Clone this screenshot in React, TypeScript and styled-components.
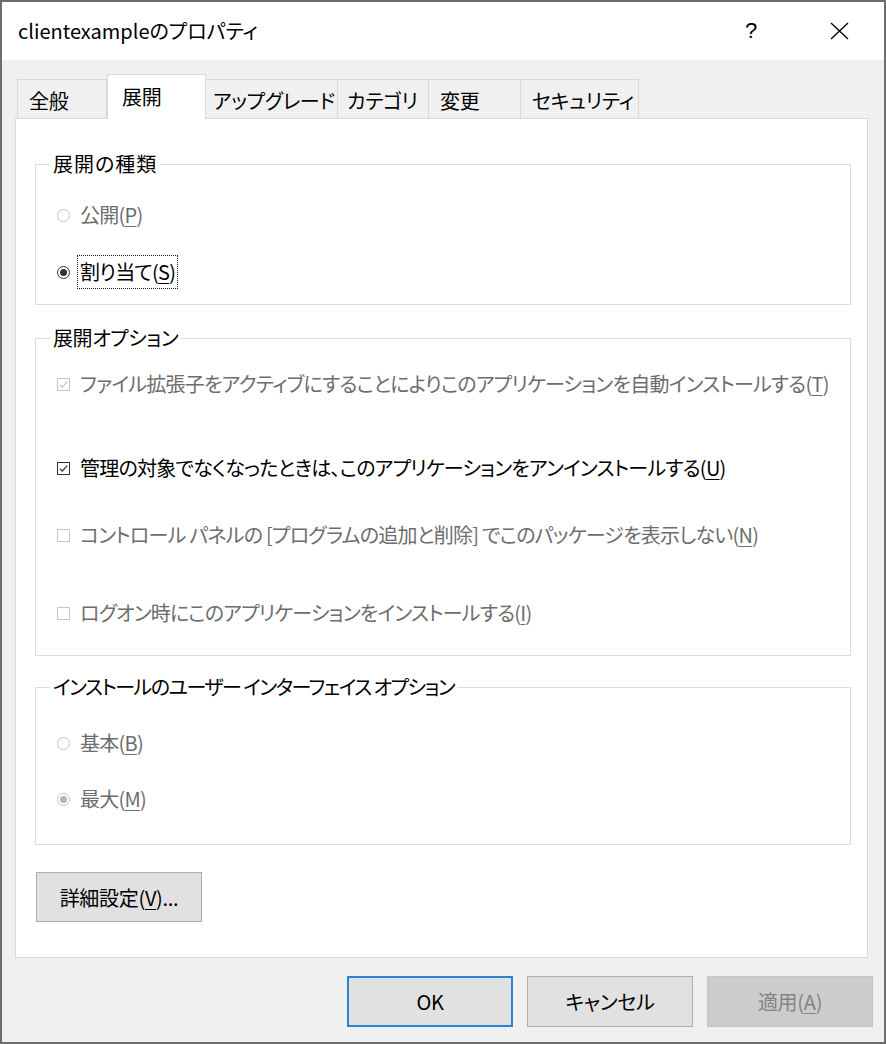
import React from 'react';
import styled, { createGlobalStyle } from 'styled-components';

const FONT = '"Noto Sans CJK JP", "Noto Sans", sans-serif';

const Global = createGlobalStyle`
  html, body { margin: 0; padding: 0; background: #ffffff; }
  body { font-family: ${FONT}; font-feature-settings: "palt"; color: #000; }
  * { box-sizing: border-box; }
`;

const Window = styled.div`
  width: 886px;
  height: 1044px;
  border: 2px solid #6e6e6e;
  display: flex;
  flex-direction: column;
  background: #f0f0f0;
`;

const TitleBar = styled.div`
  height: 58px;
  background: #ffffff;
  display: flex;
  align-items: center;
  padding-left: 16px;
  flex-shrink: 0;
`;

const Title = styled.div`
  font-size: 20px;
  flex: 1;
  color: #000;
  padding-bottom: 2px;
`;

const CaptionButton = styled.div<{ $w: number }>`
  width: ${(p) => p.$w}px;
  height: 58px;
  display: flex;
  align-items: center;
  justify-content: center;
  font-size: 22px;
  font-family: "Liberation Sans", sans-serif;
  color: #000;
`;

const Body = styled.div`
  flex: 1;
  display: flex;
  flex-direction: column;
  padding: 14px 11px 15px 13px;
`;

const TabRow = styled.div`
  height: 44px;
  display: flex;
  align-items: flex-end;
  padding-left: 3px;
  margin-right: 5px;
`;

const Tab = styled.div<{ $w: number; $active?: boolean; $pl: number }>`
  width: ${(p) => p.$w}px;
  height: ${(p) => (p.$active ? 45 : 39)}px;
  margin-bottom: ${(p) => (p.$active ? -1 : 0)}px;
  margin-left: ${(p) => (p.$active ? 0 : -1)}px;
  background: ${(p) => (p.$active ? '#ffffff' : '#f0f0f0')};
  border: 1px solid #d9d9d9;
  border-bottom: none;
  font-size: 20px;
  display: flex;
  align-items: center;
  padding-left: ${(p) => p.$pl}px;
  padding-top: ${(p) => (p.$active ? 0 : 3)}px;
  padding-bottom: ${(p) => (p.$active ? 2 : 0)}px;
  position: relative;
  z-index: ${(p) => (p.$active ? 2 : 1)};
  color: #000;
  white-space: nowrap;
  letter-spacing: -0.3px;
`;

const Panel = styled.div`
  flex: 1;
  background: #ffffff;
  border: 1px solid #d9d9d9;
  margin-right: 5px;
  padding: 31px 16px 0 19px;
  display: flex;
  flex-direction: column;
`;

const Group = styled.fieldset<{ $mt: number; $pt: number; $pb: number }>`
  margin: ${(p) => p.$mt}px 0 0 0;
  min-width: 0;
  border: 1px solid #dcdcdc;
  padding: ${(p) => p.$pt}px 16px ${(p) => p.$pb}px 21px;
`;

const Legend = styled.legend<{ $ls?: number }>`
  font-size: 20px;
  line-height: 28px;
  padding: 0 3px;
  margin-left: -7px;
  letter-spacing: ${(p) => p.$ls ?? 0}px;
  color: #000;
`;

const Row = styled.div<{ $mt?: number }>`
  height: 30px;
  margin-top: ${(p) => p.$mt ?? 0}px;
  display: flex;
  align-items: center;
`;

const Label = styled.span<{ $disabled?: boolean; $focus?: boolean }>`
  font-size: 20px;
  line-height: 28px;
  letter-spacing: -0.75px;
  margin-left: 7px;
  padding: 2px 2px;
  border: 1px ${(p) => (p.$focus ? 'dotted #1a1a1a' : 'solid transparent')};
  color: ${(p) => (p.$disabled ? '#6d6d6d' : '#000')};
  white-space: nowrap;
  u { text-underline-offset: 3px; text-decoration-thickness: 1px; }
`;

const Radio = ({ checked, disabled }: { checked?: boolean; disabled?: boolean }) => {
  const ring = disabled ? '#c2c2c2' : '#333333';
  const dot = disabled ? '#b5b5b5' : '#333333';
  return (
    <svg width="13" height="13" viewBox="0 0 13 13" style={{ flexShrink: 0 }}>
      <circle cx="6.5" cy="6.5" r="6" fill="#fff" stroke={ring} strokeWidth="1" />
      {checked && <circle cx="6.5" cy="6.5" r="3.5" fill={dot} />}
    </svg>
  );
};

const Check = ({ checked, disabled }: { checked?: boolean; disabled?: boolean }) => {
  const c = disabled ? '#c6c6c6' : '#333333';
  return (
    <svg width="13" height="13" viewBox="0 0 13 13" style={{ flexShrink: 0 }}>
      <rect x="0.5" y="0.5" width="12" height="12" fill="#fff" stroke={c} strokeWidth="1" />
      {checked && <path d="M2.8 6.6 L5.3 9.1 L10.2 3.6" fill="none" stroke={c} strokeWidth="1.3" />}
    </svg>
  );
};

const PushButton = styled.div<{ $variant?: 'default' | 'normal' | 'disabled'; $w: number; $h: number }>`
  width: ${(p) => p.$w}px;
  height: ${(p) => p.$h}px;
  display: flex;
  align-items: center;
  justify-content: center;
  font-size: 20px;
  letter-spacing: -0.3px;
  background: ${(p) => (p.$variant === 'disabled' ? '#cccccc' : '#e1e1e1')};
  border: ${(p) =>
    p.$variant === 'default'
      ? '2px solid #2a84d6'
      : p.$variant === 'disabled'
      ? '1px solid #c4c4c4'
      : '1px solid #adadad'};
  color: ${(p) => (p.$variant === 'disabled' ? '#838383' : '#000')};
  flex-shrink: 0;
  u { text-underline-offset: 3px; text-decoration-thickness: 1px; }
`;

const AdvancedWrap = styled.div`
  margin-top: 27px;
  margin-left: 1px;
`;

const Footer = styled.div`
  display: flex;
  justify-content: flex-end;
  gap: 14px;
  padding-top: 18px;
  height: 69px;
  flex-shrink: 0;
`;

const tabs = [
  { t: '全般', w: 90, pl: 11 },
  { t: '展開', w: 99, pl: 14, active: true },
  { t: 'アップグレード', w: 133, pl: 7 },
  { t: 'カテゴリ', w: 92, pl: 9 },
  { t: '変更', w: 93, pl: 11 },
  { t: 'セキュリティ', w: 119, pl: 11 },
];

export default function App() {
  return (
    <>
      <Global />
      <Window>
        <TitleBar>
          <Title>clientexampleのプロパティ</Title>
          <CaptionButton $w={86}>?</CaptionButton>
          <CaptionButton $w={90}>
            <svg width="19" height="18" viewBox="0 0 19 18">
              <path d="M1 1 L18 17 M18 1 L1 17" stroke="#000" strokeWidth="1.3" fill="none" />
            </svg>
          </CaptionButton>
        </TitleBar>
        <Body>
          <TabRow>
            {tabs.map((t) => (
              <Tab key={t.t} $w={t.w} $pl={t.pl} $active={t.active}>
                {t.t}
              </Tab>
            ))}
          </TabRow>
          <Panel>
            <Group $mt={0} $pt={22} $pb={17}>
              <Legend $ls={1}>展開の種類</Legend>
              <Row>
                <Radio disabled />
                <Label $disabled>公開(<u>P</u>)</Label>
              </Row>
              <Row $mt={27}>
                <Radio checked />
                <Label $focus>割り当て(<u>S</u>)</Label>
              </Row>
            </Group>
            <Group $mt={19} $pt={17} $pb={27}>
              <Legend $ls={-0.4}>展開オプション</Legend>
              <Row>
                <Check checked disabled />
                <Label $disabled>
                  ファイル拡張子をアクティブにすることによりこのアプリケーションを自動インストールする(<u>T</u>)
                </Label>
              </Row>
              <Row $mt={54}>
                <Check checked />
                <Label>
                  管理の対象でなくなったときは、このアプリケーションをアンインストールする(<u>U</u>)
                </Label>
              </Row>
              <Row $mt={37}>
                <Check disabled />
                <Label $disabled>
                  コントロール パネルの [プログラムの追加と削除] でこのパッケージを表示しない(<u>N</u>)
                </Label>
              </Row>
              <Row $mt={48}>
                <Check disabled />
                <Label $disabled>
                  ログオン時にこのアプリケーションをインストールする(<u>I</u>)
                </Label>
              </Row>
            </Group>
            <Group $mt={17} $pt={27} $pb={30}>
              <Legend $ls={-1.5}>インストールのユーザー インターフェイス オプション</Legend>
              <Row>
                <Radio disabled />
                <Label $disabled>基本(<u>B</u>)</Label>
              </Row>
              <Row $mt={26}>
                <Radio checked disabled />
                <Label $disabled>最大(<u>M</u>)</Label>
              </Row>
            </Group>
            <AdvancedWrap>
              <PushButton $w={166} $h={50} $variant="normal">
                詳細設定(<u>V</u>)...
              </PushButton>
            </AdvancedWrap>
          </Panel>
          <Footer>
            <PushButton $w={166} $h={51} $variant="default">OK</PushButton>
            <PushButton $w={166} $h={51} $variant="normal">キャンセル</PushButton>
            <PushButton $w={166} $h={51} $variant="disabled">適用(<u>A</u>)</PushButton>
          </Footer>
        </Body>
      </Window>
    </>
  );
}
